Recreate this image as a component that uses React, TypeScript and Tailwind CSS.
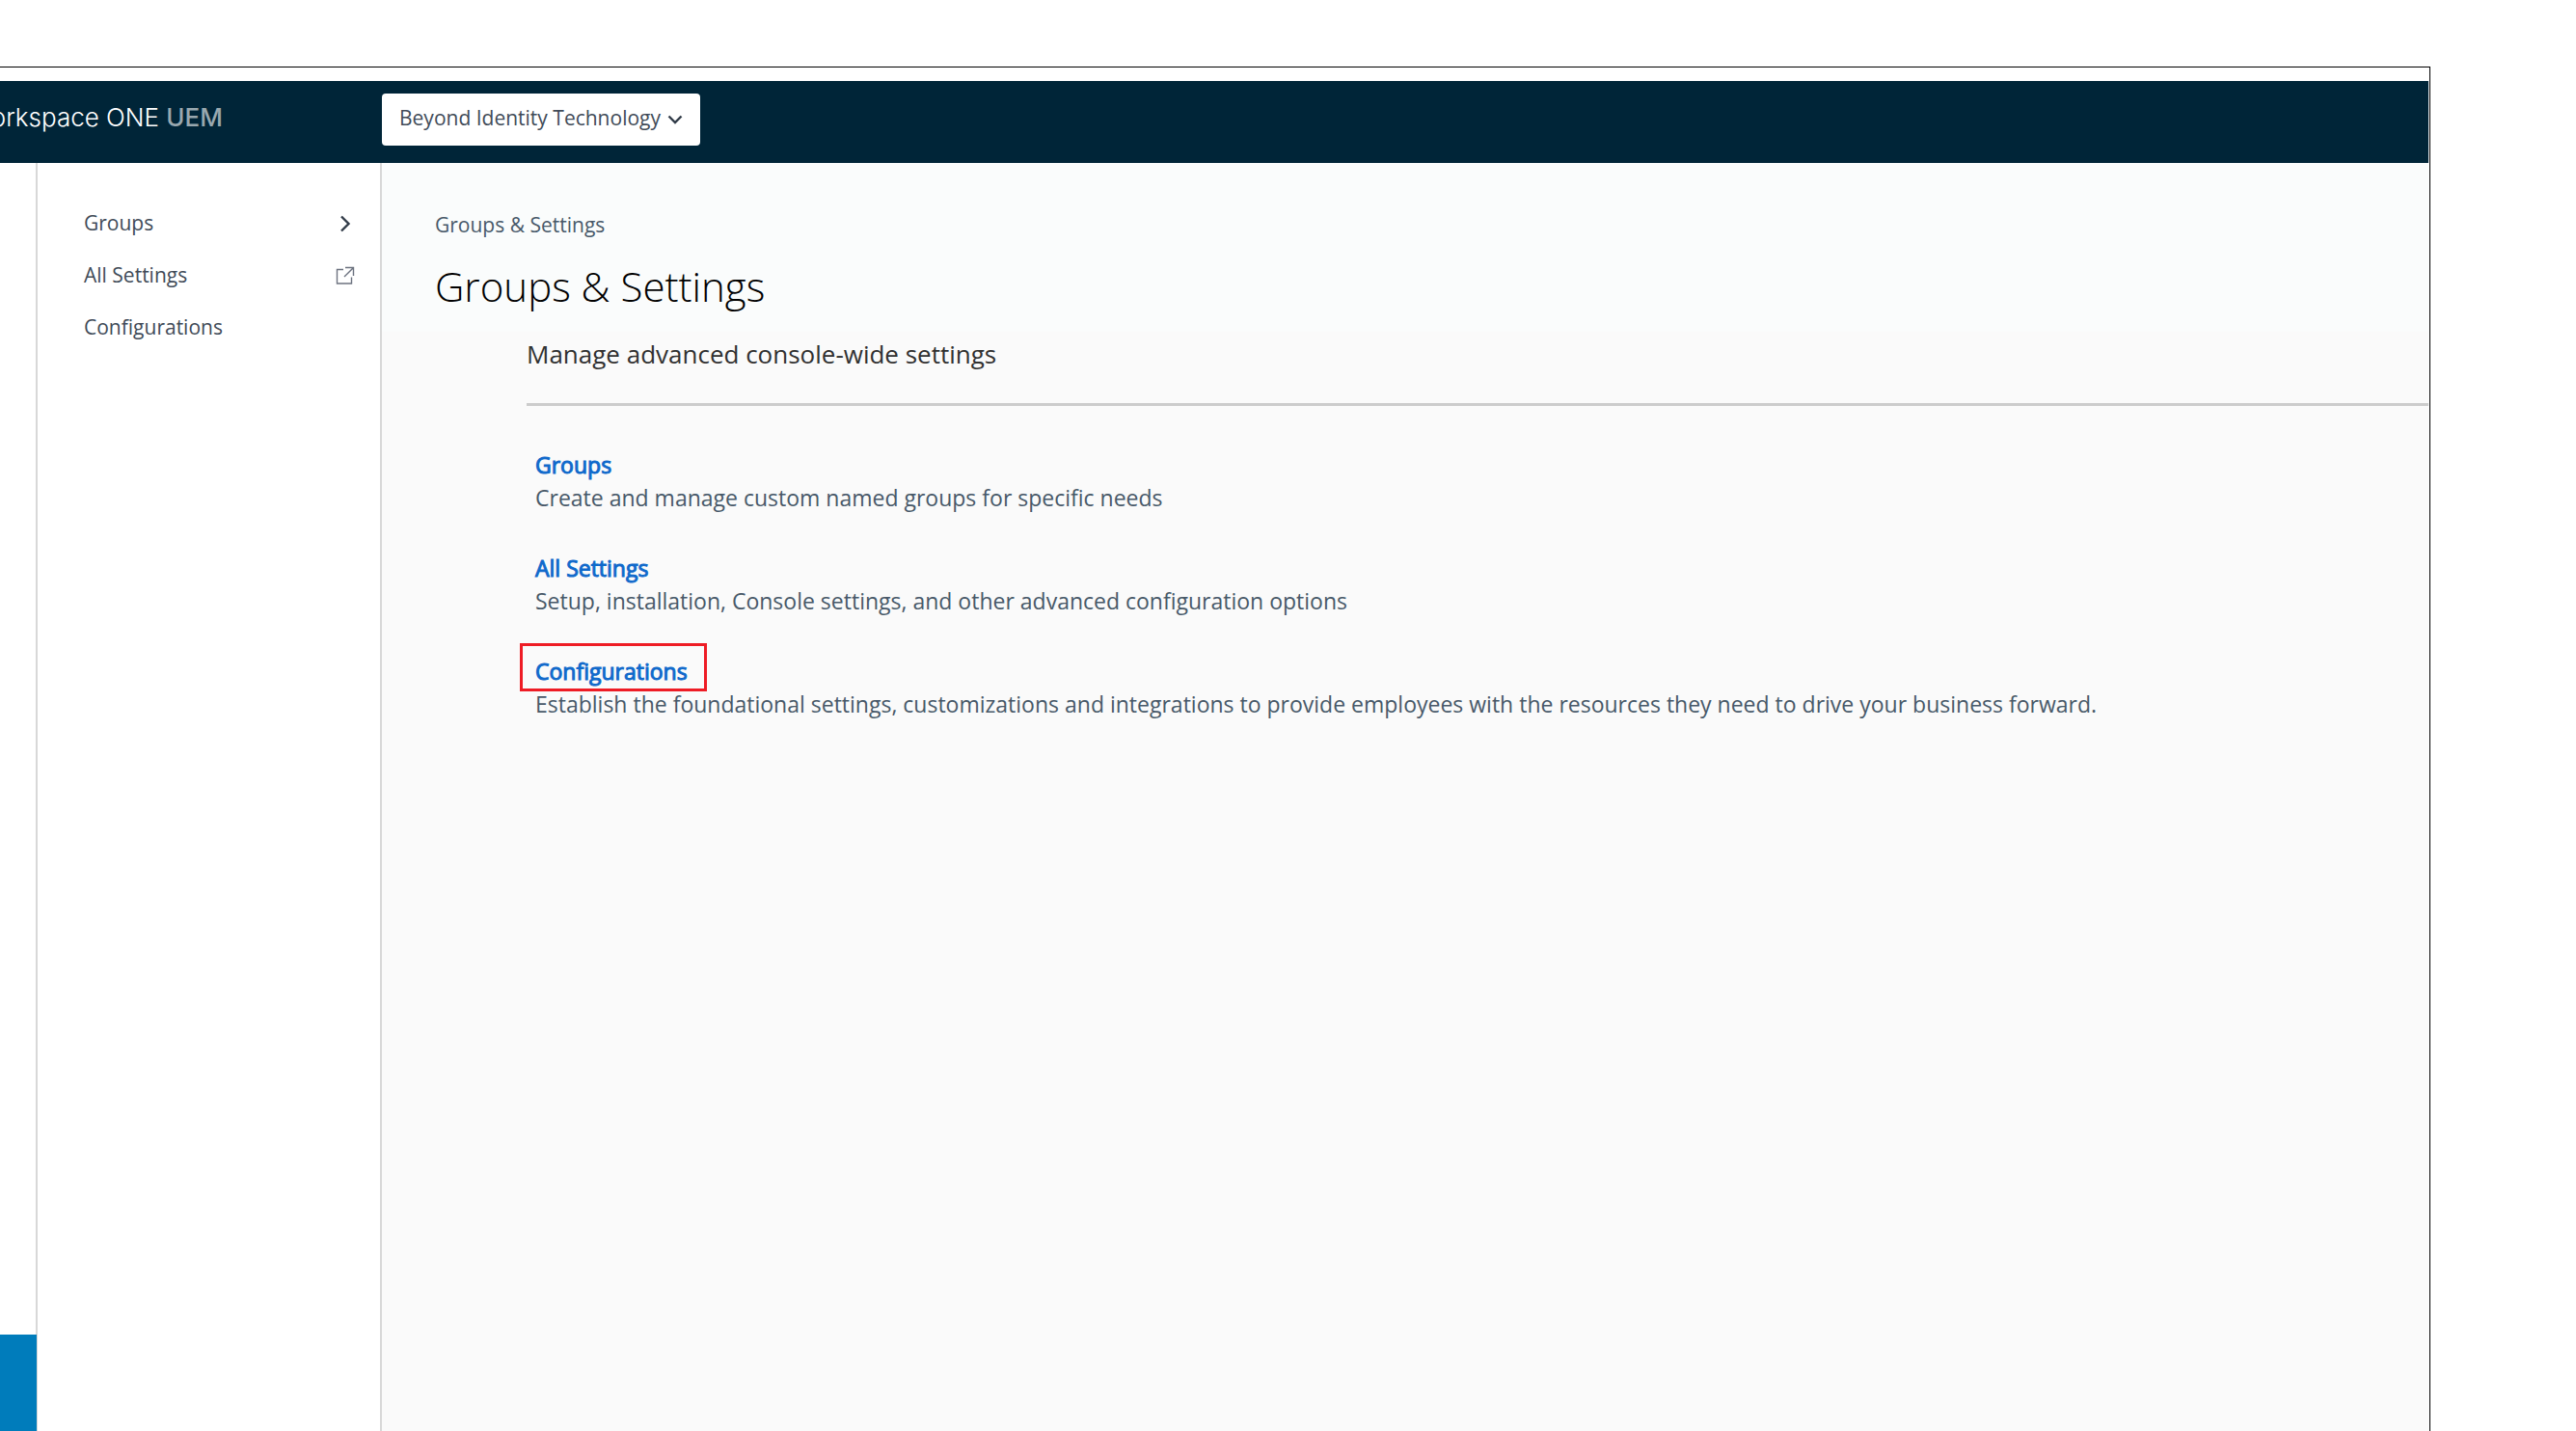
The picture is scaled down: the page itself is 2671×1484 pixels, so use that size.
const navItems = [
  { label: "Groups", icon: "chevron" },
  { label: "All Settings", icon: "external" },
  { label: "Configurations", icon: "" },
];

const sections = [
  { title: "Groups", text: "Create and manage custom named groups for specific needs", marked: false },
  { title: "All Settings", text: "Setup, installation, Console settings, and other advanced configuration options", marked: false },
  {
    title: "Configurations",
    text: "Establish the foundational settings, customizations and integrations to provide employees with the resources they need to drive your business forward.",
    marked: true,
  },
];

function ChevronRight() {
  return (
    <svg className="h-5 w-5 text-[#313b48]" viewBox="0 0 20 20" fill="none" stroke="currentColor" strokeWidth="2.4" aria-hidden="true">
      <path d="M6 2.500 13.500 10 6 17.500" />
    </svg>
  );
}

function External() {
  return (
    <svg className="h-5 w-5 text-[#6d7380]" viewBox="0 0 20 20" fill="none" stroke="currentColor" strokeWidth="1.4" aria-hidden="true">
      <path d="M8 3.500H1.500V18H16.500V11.500" />
      <path d="M10 1.500H18.500V10M18.300 1.700 9 11" />
    </svg>
  );
}

function Header() {
  return (
    <header className="flex h-[85px] bg-[#002538]">
      <div className="flex w-[396px] shrink-0 justify-end overflow-hidden pr-[165px] pt-5">
        <a href="#home" className="whitespace-nowrap font-['Inter'] text-[26px] font-light leading-9 text-white">
          orkspace ONE <span className="font-medium text-[#99a8af]">UEM</span>
        </a>
      </div>
      <div className="relative mt-[13px] h-[54px] w-[330px]">
        <select
          aria-label="Organization group"
          className="h-full w-full appearance-none rounded bg-white pb-0.5 pl-[18px] pr-10 text-[21px] text-[#414b58]"
        >
          <option>Beyond Identity Technology</option>
        </select>
        <svg
          className="pointer-events-none absolute right-[18px] top-[19px] h-4 w-4 text-[#313b48]"
          viewBox="0 0 16 16"
          fill="none"
          stroke="currentColor"
          strokeWidth="2.4"
          aria-hidden="true"
        >
          <path d="M1.500 4.500 8 11l6.500-6.500" />
        </svg>
      </div>
    </header>
  );
}

export default function App() {
  return (
    <div className="flex min-h-screen flex-col bg-white pr-[151px] pt-[69px] font-['Open_Sans',sans-serif]">
      <div className="flex grow flex-col border-r border-t border-black pr-px pt-[14px]">
        <Header />
        <div className="flex grow">
          <div className="flex w-[39px] shrink-0 flex-col justify-end border-r-2 border-[#d8d8d8]">
            <div className="-mr-px h-[100px] bg-[#007cbb]" />
          </div>
          <nav className="w-[357px] shrink-0 border-r-2 border-[#d8d8d8] pl-12 pr-[26px] pt-9">
            {navItems.map((item) => (
              <a key={item.label} href="#nav" className="flex h-[54px] items-center justify-between text-[21px] text-[#414b58]">
                <span>{item.label}</span>
                {item.icon === "chevron" && <ChevronRight />}
                {item.icon === "external" && <External />}
              </a>
            ))}
          </nav>
          <main className="min-w-0 grow bg-[#fafafa]">
            <div className="h-[175px] bg-[#fafcfc] pl-[55px] pt-12">
              <a href="#crumb" className="block text-[21px] leading-8 text-[#485969]">Groups &amp; Settings</a>
              <h1 className="mt-4 text-[42px] font-light leading-[64px] text-black">Groups &amp; Settings</h1>
            </div>
            <div className="ml-[150px]">
              <p className="h-[77px] border-b-3 border-[#ccc] pt-[5px] text-[26px] leading-9 text-[#313131]">
                Manage advanced console-wide settings
              </p>
              <div className="flex flex-col gap-[39px] pl-[9px] pt-11">
                {sections.map((s) => (
                  <section key={s.title} className="text-[23px] leading-[34px]">
                    <h2 className="relative w-fit">
                      <a href="#section" className="text-[#0f69cb] [-webkit-text-stroke:1px]">{s.title}</a>
                      {s.marked && (
                        <span className="pointer-events-none absolute -bottom-1 -left-4 -right-5 -top-3 border-3 border-[#ee1c25]" />
                      )}
                    </h2>
                    <p className="text-[#485969]">{s.text}</p>
                  </section>
                ))}
              </div>
            </div>
          </main>
        </div>
      </div>
    </div>
  );
}
